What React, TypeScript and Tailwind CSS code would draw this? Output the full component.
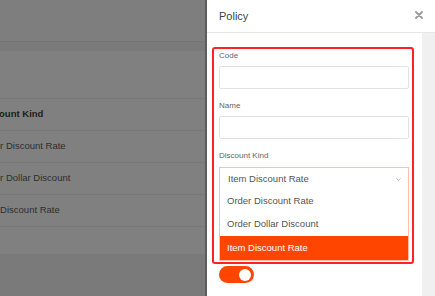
import { ChevronDown } from "lucide-react";

const rows = ["Order Discount Rate", "Order Dollar Discount", "Item Discount Rate"];

function Backdrop() {
  return (
    <div className="w-[205px] shrink-0 bg-[#7a7a7a] flex flex-col">
      {/* page header under the mask */}
      <div className="h-[42px] bg-[#7e7e7e] border-b border-[#737373]" />
      <div className="h-[9px]" />
      {/* table card */}
      <div className="h-[203px] bg-[#808080] flex flex-col">
        <div className="h-[48px] border-b border-[#787878]" />
        <div className="h-[32px] border-b border-[#787878] flex items-center -ml-[21px] text-[9.5px] font-bold text-[#1c1c1c] whitespace-nowrap">
          Discount Kind
        </div>
        {rows.map((r) => (
          <div
            key={r}
            className="h-[32px] border-b border-[#787878] flex items-center -ml-[21px] text-[9.5px] text-[#2e2e2e] whitespace-nowrap"
          >
            {r}
          </div>
        ))}
      </div>
    </div>
  );
}

function Field({ label, top }: { label: string; top: string }) {
  return (
    <div className={top}>
      <div className="h-[10px] leading-[10px] text-[8px] text-[#666]">{label}</div>
      <div className="mt-[5px] h-[23px] border border-[#e2e2e2] rounded-[2px] bg-white" />
    </div>
  );
}

export default function App() {
  return (
    <div className="flex h-[296px] w-[435px] overflow-hidden bg-white font-['Liberation_Sans',Arial,sans-serif]">
      <Backdrop />

      {/* Drawer */}
      <div className="flex-1 flex flex-col bg-white border-l-2 border-[#5c5c5c]">
        <div className="h-[33px] shrink-0 border-b border-[#e6e6e6] flex items-center justify-between pl-[12px] pr-[12px]">
          <span className="text-[11px] text-[#444]">Policy</span>
          <svg width="8" height="8" viewBox="0 0 8 8" className="mt-[-2px]">
            <path d="M1 1 L7 7 M7 1 L1 7" stroke="#9a9a9a" strokeWidth="1.8" strokeLinecap="round" />
          </svg>
        </div>

        <div className="flex-1 flex">
          <div className="flex-1 pt-[14px] pl-[5px] pr-[8px]">
            {/* highlighted form block */}
            <div className="border-2 border-[#ff2222] rounded-[3px] pt-[2px] pb-[1px] pl-[5px] pr-[3px]">
              <Field label="Code" top="" />
              <Field label="Name" top="mt-[12px]" />
              <div className="mt-[12px] h-[10px] leading-[10px] text-[8px] text-[#666]">Discount Kind</div>
              <div className="mt-[6px] border border-[#ffbfae] bg-white text-[9.5px] text-[#555]">
                <div className="h-[22px] flex items-center justify-between pl-[8px] pr-[6px]">
                  <span>Item Discount Rate</span>
                  <ChevronDown size={7} strokeWidth={2.5} color="#999" />
                </div>
                <div className="h-[22px] flex items-center pl-[7px]">Order Discount Rate</div>
                <div className="h-[24px] flex items-center pl-[7px]">Order Dollar Discount</div>
                <div className="h-[24px] flex items-center pl-[7px] bg-[#ff4500] text-white">
                  Item Discount Rate
                </div>
              </div>
            </div>

            {/* switch */}
            <div className="mt-[2px] ml-[7px] w-[35px] h-[17px] rounded-full bg-[#ff4500] flex items-center justify-end pr-[3px]">
              <div className="w-[12px] h-[12px] rounded-full bg-white" />
            </div>
          </div>
          <div className="w-[13px] shrink-0 bg-[#f0f0f0]" />
        </div>
      </div>
    </div>
  );
}
